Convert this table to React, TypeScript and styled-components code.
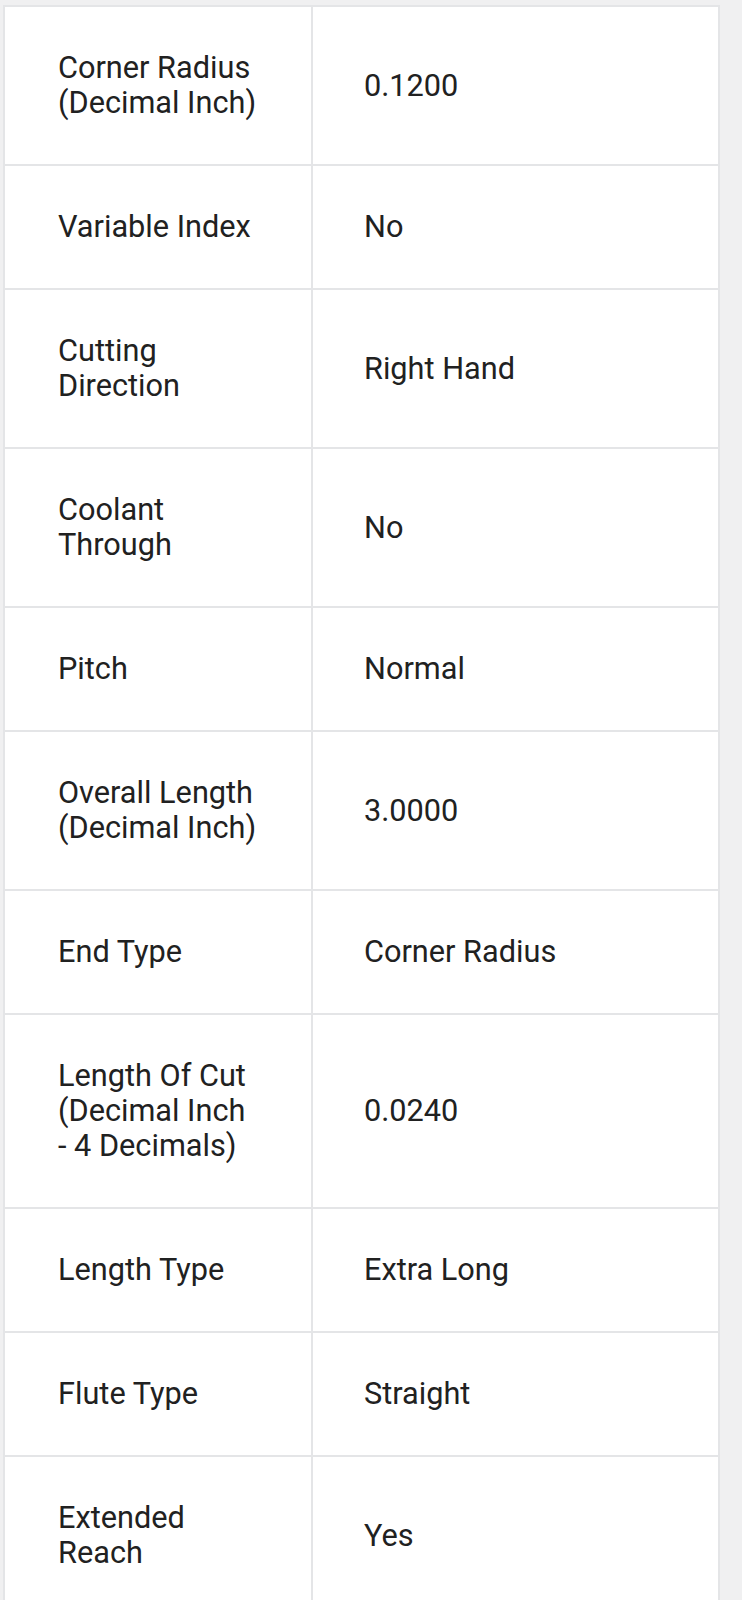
import React from "react";
import styled, { createGlobalStyle } from "styled-components";

const Global = createGlobalStyle`
  html, body {
    margin: 0;
    padding: 0;
    background: #f0f0f1;
  }
  body {
    font-family: Roboto, "Noto Sans", Arial, sans-serif;
  }
`;

const Page = styled.div`
  padding: 5px 22px 0 3px;
`;

const Table = styled.div`
  display: grid;
  grid-template-columns: 306px 1fr;
  gap: 2px;
  padding: 2px;
  background: #e4e5e7;
`;

const Cell = styled.div<{ $value?: boolean }>`
  background: #ffffff;
  padding: 43px 20px 44px ${(p) => (p.$value ? "51px" : "53px")};
  display: flex;
  align-items: center;
  font-size: 30.7px;
  line-height: 35px;
  color: #212121;
`;

const rows: [string, string][] = [
  ["Corner Radius\n(Decimal Inch)", "0.1200"],
  ["Variable Index", "No"],
  ["Cutting\nDirection", "Right Hand"],
  ["Coolant\nThrough", "No"],
  ["Pitch", "Normal"],
  ["Overall Length\n(Decimal Inch)", "3.0000"],
  ["End Type", "Corner Radius"],
  ["Length Of Cut\n(Decimal Inch\n- 4 Decimals)", "0.0240"],
  ["Length Type", "Extra Long"],
  ["Flute Type", "Straight"],
  ["Extended\nReach", "Yes"],
];

const Label = styled.span`
  white-space: pre-line;
`;

export default function App() {
  return (
    <>
      <Global />
      <Page>
        <Table>
          {rows.map(([k, v]) => (
            <React.Fragment key={k}>
              <Cell>
                <Label>{k}</Label>
              </Cell>
              <Cell $value>{v}</Cell>
            </React.Fragment>
          ))}
        </Table>
      </Page>
    </>
  );
}
